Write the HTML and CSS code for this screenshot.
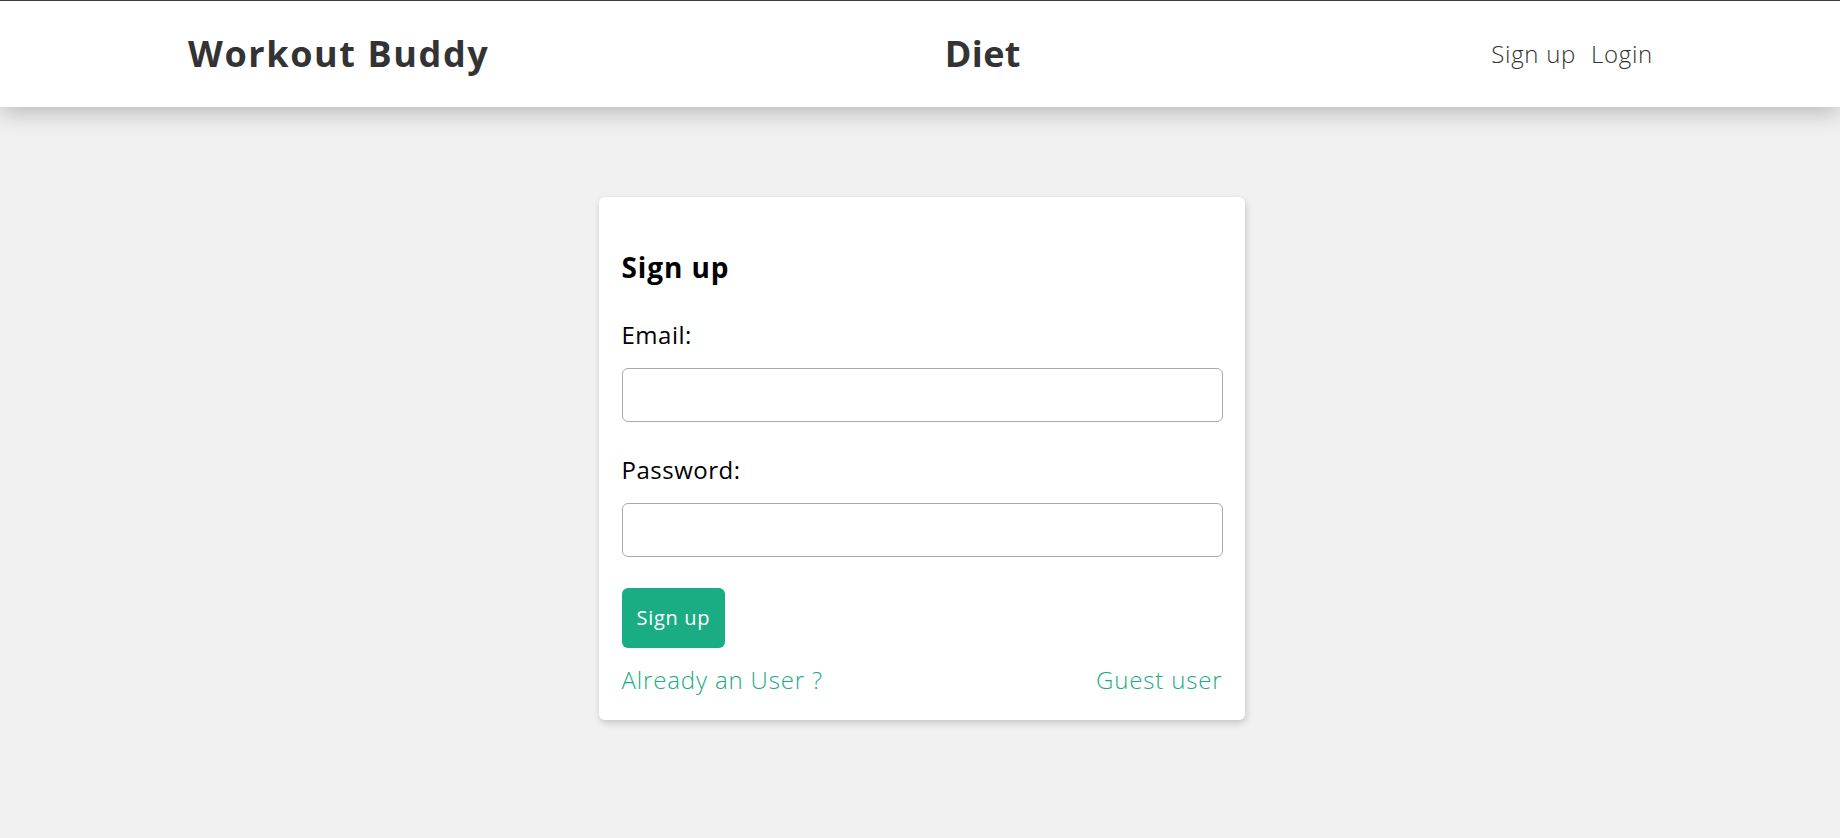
FILE: index.html
```html
<!DOCTYPE html>
<html lang="en">
<head>
<meta charset="utf-8">
<title>Workout Buddy</title>
<link rel="stylesheet" href="styles.css">
</head>
<body>
<header class="site-header">
  <div class="header-inner">
    <a class="brand" href="#">Workout Buddy</a>
    <a class="brand brand-diet" href="#">Diet</a>
    <nav class="nav">
      <a class="nav-link" href="#">Sign up</a>
      <a class="nav-link" href="#">Login</a>
    </nav>
  </div>
</header>
<main class="page">
  <form class="auth-card">
    <h3 class="auth-title">Sign up</h3>
    <label class="field-label" for="email">Email:</label>
    <input class="field-input" id="email" type="email">
    <label class="field-label" for="password">Password:</label>
    <input class="field-input" id="password" type="password">
    <button class="btn-primary" type="button">Sign up</button>
    <div class="auth-links">
      <a class="auth-link" href="#">Already an User ?</a>
      <a class="auth-link" href="#">Guest user</a>
    </div>
  </form>
</main>
</body>
</html>
```
FILE: styles.css
```css
* { box-sizing: border-box; }

html, body {
  margin: 0;
  padding: 0;
}

body {
  background: #f1f1f1;
  font-family: "Open Sans", "Noto Sans", sans-serif;
  color: #000;
  min-height: 838px;
}

.site-header {
  background: #fff;
  border-top: 1px solid #3c3c3c;
  box-shadow: 0 6px 22px rgba(0, 0, 0, 0.23);
  position: relative;
  z-index: 1;
}

.header-inner {
  height: 106px;
  padding: 0 187px 0 188px;
  display: flex;
  align-items: center;
  justify-content: space-between;
}

.brand {
  font-size: 36px;
  font-weight: 700;
  line-height: 54px;
  color: #333;
  text-decoration: none;
  letter-spacing: 1.6px;
}

.brand-diet {
  letter-spacing: 0.4px;
}

.nav {
  display: flex;
  align-items: center;
}

.nav-link {
  margin-left: 15px;
  font-size: 24px;
  font-weight: 300;
  line-height: 36px;
  color: #333;
  text-decoration: none;
  letter-spacing: 0.7px;
}

.page {
  padding-top: 90px;
  padding-left: 3px;
}

.auth-card {
  width: 646px;
  margin: 0 auto;
  padding: 22px 22px 22px 23px;
  background: #fff;
  border-radius: 6px;
  box-shadow: 1px 3px 7px rgba(0, 0, 0, 0.18);
  display: flex;
  flex-direction: column;
}

.auth-title {
  margin: 27px 0 29px;
  font-size: 28px;
  font-weight: 700;
  line-height: 42px;
  letter-spacing: 0.9px;
  color: #000;
}

.field-label {
  font-size: 24px;
  line-height: 36px;
  font-weight: 400;
  letter-spacing: 0.5px;
  color: #000;
}

.field-input {
  display: block;
  width: 100%;
  height: 54px;
  margin: 15px 0 30px;
  padding: 0 15px;
  border: 1px solid #aaa;
  border-radius: 6px;
  background: #fff;
  font-family: inherit;
  font-size: 20px;
}

.btn-primary {
  align-self: flex-start;
  margin-top: 1px;
  height: 60px;
  padding: 0 15px;
  border: 0;
  border-radius: 6px;
  background: #1aac83;
  color: #fff;
  font-family: inherit;
  font-size: 20px;
  line-height: 30px;
  font-weight: 400;
  letter-spacing: 0.7px;
  cursor: pointer;
}

.auth-links {
  margin-top: 14px;
  display: flex;
  justify-content: space-between;
  align-items: center;
}

.auth-link {
  font-size: 24px;
  line-height: 36px;
  font-weight: 300;
  letter-spacing: 0.85px;
  color: #1aac83;
  text-decoration: none;
}
```
